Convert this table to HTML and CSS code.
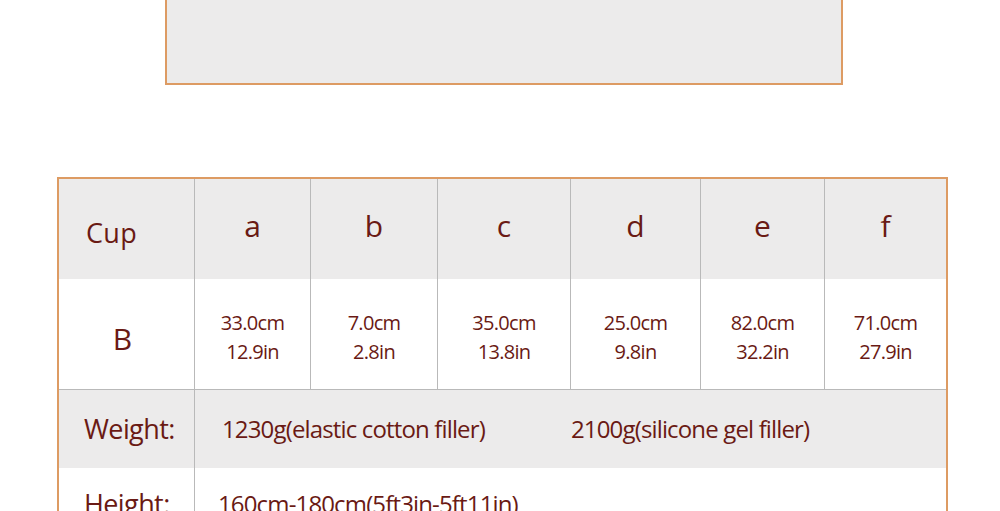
FILE: index.html
```html
<!DOCTYPE html>
<html>
<head>
<meta charset="utf-8">
<link rel="stylesheet" href="styles.css">
</head>
<body>
<div class="photo"></div>
<div class="gap"></div>
<div class="size-table">
  <div class="cell head label">Cup</div>
  <div class="cell head cup">a</div>
  <div class="cell head cup">b</div>
  <div class="cell head cup">c</div>
  <div class="cell head cup">d</div>
  <div class="cell head cup">e</div>
  <div class="cell head cup last">f</div>

  <div class="cell row-b label-b">B</div>
  <div class="cell row-b val"><span>33.0cm</span><span>12.9in</span></div>
  <div class="cell row-b val"><span>7.0cm</span><span>2.8in</span></div>
  <div class="cell row-b val"><span>35.0cm</span><span>13.8in</span></div>
  <div class="cell row-b val"><span>25.0cm</span><span>9.8in</span></div>
  <div class="cell row-b val"><span>82.0cm</span><span>32.2in</span></div>
  <div class="cell row-b val last"><span>71.0cm</span><span>27.9in</span></div>

  <div class="cell row-w label-w">Weight:</div>
  <div class="cell row-w span-a info">1230g(elastic cotton filler)</div>
  <div class="cell row-w span-b info last">2100g(silicone gel filler)</div>

  <div class="cell row-h label-h">Height:</div>
  <div class="cell row-h span-all info2 last">160cm-180cm(5ft3in-5ft11in)</div>
</div>
</body>
</html>
```

FILE: styles.css
```css
html, body {
  margin: 0;
  padding: 0;
  background: #ffffff;
}
body {
  font-family: "Open Sans", "Noto Sans", sans-serif;
  color: #6a1a14;
  overflow: hidden;
  height: 511px;
}
.photo {
  margin-left: 165px;
  width: 678px;
  height: 85px;
  box-sizing: border-box;
  background: #ecebeb;
  border-left: 2px solid #dd9b63;
  border-right: 2px solid #dd9b63;
  border-bottom: 2px solid #dd9b63;
}
.gap {
  height: 92px;
}
.size-table {
  margin-left: 57px;
  width: 887px;
  border: 2px solid #dd9b63;
  border-bottom: none;
  display: grid;
  grid-template-columns: 136px 116px 127px 133px 130px 124px 121px;
  grid-template-rows: 100px 111px 78px 80px;
}
.cell {
  box-sizing: border-box;
  border-right: 1px solid #b9b9b9;
  display: flex;
  align-items: center;
  justify-content: center;
}
.cell.last {
  border-right: none;
}
.head {
  background: #ecebeb;
}
.label {
  justify-content: flex-start;
  padding-left: 27px;
  padding-top: 6px;
  font-size: 27px;
  letter-spacing: 0.3px;
}
.cup {
  font-size: 30px;
  padding-bottom: 8px;
}
.row-b {
  border-bottom: 1px solid #b9b9b9;
  flex-direction: column;
}
.label-b {
  font-size: 30px;
  padding-right: 8px;
  padding-top: 8px;
}
.val {
  font-size: 20px;
  line-height: 29px;
  letter-spacing: -0.7px;
  padding-top: 6px;
}
.row-w {
  background: #ecebeb;
}
.label-w {
  justify-content: flex-start;
  padding-left: 25px;
  font-size: 27px;
  letter-spacing: -0.6px;
  padding-bottom: 2px;
}
.span-a {
  grid-column: 2 / 5;
  justify-content: flex-start;
  padding-left: 27px;
  border-right: none;
}
.span-b {
  grid-column: 5 / 8;
  justify-content: flex-start;
  padding-left: 0;
}
.info {
  font-size: 24px;
  letter-spacing: -0.85px;
  padding-bottom: 2px;
}
.row-h {
  align-items: flex-start;
  padding-top: 17px;
}
.label-h {
  justify-content: flex-start;
  padding-left: 25px;
  font-size: 27px;
  letter-spacing: -0.6px;
}
.span-all {
  grid-column: 2 / 8;
  justify-content: flex-start;
  padding-left: 23px;
  padding-top: 19px;
}
.info2 {
  font-size: 24px;
  letter-spacing: -0.85px;
}
```
